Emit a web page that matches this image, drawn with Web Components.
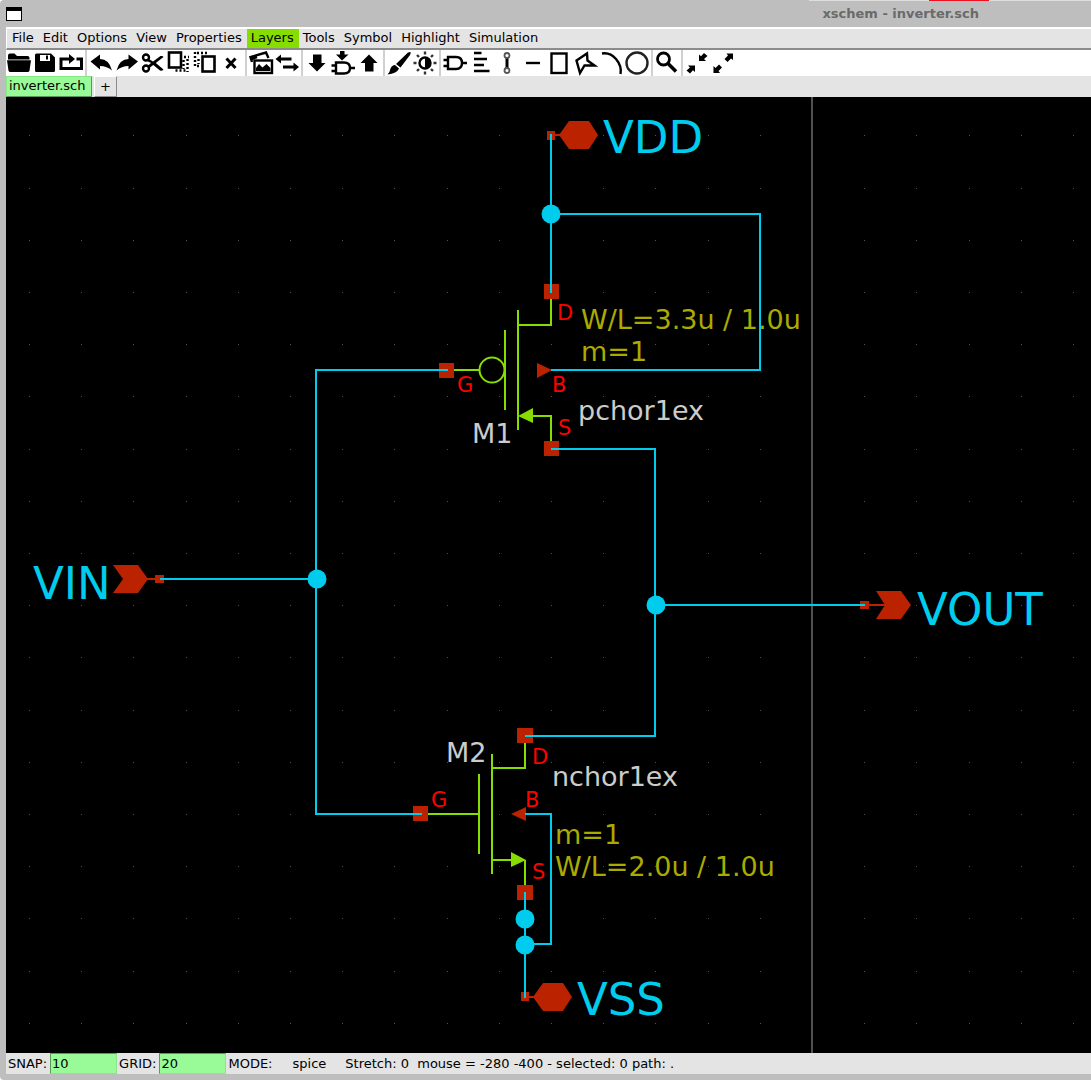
<!DOCTYPE html>
<html lang="en">
<head>
<meta charset="utf-8">
<title>xschem - inverter.sch</title>
<style>
  html, body { height: 100%; }
  body {
    margin: 0;
    background: #fff;
    color: #000;
    font: 13px/16px "DejaVu Sans", Verdana, sans-serif;
  }
</style>
</head>
<body>
<app-window>
  <title-bar slot="title">xschem - inverter.sch</title-bar>
  <menu-bar>
    <menu-item>File</menu-item>
    <menu-item>Edit</menu-item>
    <menu-item>Options</menu-item>
    <menu-item>View</menu-item>
    <menu-item>Properties</menu-item>
    <menu-item active>Layers</menu-item>
    <menu-item>Tools</menu-item>
    <menu-item>Symbol</menu-item>
    <menu-item>Highlight</menu-item>
    <menu-item>Simulation</menu-item>
  </menu-bar>
  <tool-bar></tool-bar>
  <tab-bar>
    <tab-button active>inverter.sch</tab-button>
    <tab-button>+</tab-button>
  </tab-bar>
  <schematic-view></schematic-view>
  <status-bar snap="10" grid="20" mode="spice">Stretch: 0  mouse = -280 -400 - selected: 0 path: .</status-bar>
</app-window>

<script>
const define = (name, html, setup) => customElements.define(name, class extends HTMLElement {
  constructor() {
    super();
    this.attachShadow({ mode: 'open' }).innerHTML = html;
  }
  connectedCallback() { if (setup) setup(this, this.shadowRoot); }
});

define('app-window', `
<style>
  :host {
    display: flex; flex-direction: column; box-sizing: border-box; min-height: 100vh;
    background: #bebebe; border-radius: 4px 0 0 4px; overflow: hidden;
  }
  main { flex: 1; display: flex; flex-direction: column; margin: 0 0 6px 6px; background: #e4e4e4; }
</style>
<slot name="title"></slot>
<main><slot></slot></main>`);

define('title-bar', `
<style>
  :host {
    display: flex; align-items: center; justify-content: space-between; position: relative;
    height: 27px; padding: 0 112px 0 6px; color: #6a6a6a; font-weight: bold;
  }
  .menu {
    width: 16px; height: 14px; padding: 0; box-sizing: border-box;
    background: #fff; border: 1px solid #000; border-top-width: 4px; border-radius: 0;
  }
  .behind { position: absolute; top: 0; right: 0; width: 282px; height: 1px; display: flex; background: #dedede; }
  .behind i { margin-left: 120px; width: 60px; background: #ee1122; }
</style>
<button class="menu" aria-label="Window menu"></button>
<slot></slot>
<div class="behind"><i></i></div>`);

define('menu-bar', `
<style>
  :host {
    display: flex; height: 19px; padding-left: 1px; background: #e4e4e4;
    border: solid #fff; border-width: 2px 0 0 1px;
    border-bottom: 2px solid #8b8b8b;
  }
</style>
<slot></slot>`);

define('menu-item', `
<style>
  :host { display: flex; }
  button {
    font: inherit; color: inherit; background: none; border: 0; border-radius: 0;
    padding: 0 5px 2px 4px;
  }
  :host([active]) button { background: #88dd00; }
</style>
<button><slot></slot></button>`);

const icons = {
  'Open': `<path d="M2 9.500V5.500Q2 3.500 4 3.500H8.500L11 6H21.500Q23.500 6 23.500 8V9.500Z"/><path d="M1 10.300H25L23.500 20.500Q23.200 22 21.500 22H4.500Q2.800 22 2.500 20.500Z"/>`,
  'Save': `<path fill-rule="evenodd" d="M4.500 3.500H19L23 7.500V20.500Q23 22 21.500 22H4.500Q3 22 3 20.500V5Q3 3.500 4.500 3.500ZM8 5V11H18V5ZM14 5.500H16V9.500H14Z"/>`,
  'Reload': `<path class="l" stroke-width="3" d="M12 9H3V18.500H23.500V9H18.500"/><path d="M11 4L17 9L11 14Z"/>`,
  '|1': '',
  'Undo': `<path d="M2.500 11.500L12 4.500V9Q21 9 24 20.500Q19 16 12 16V19.500Z"/>`,
  'Redo': `<path d="M24 11.500L14.500 4.500V9Q5.500 9 2.500 20.500Q7.500 16 14.500 16V19.500Z"/>`,
  'Cut': `<g class="l" stroke-width="2.400"><circle cx="6" cy="7.500" r="3"/><circle cx="6" cy="18.500" r="3"/></g><path d="M8 8.500L13 11.500L20.500 6Q23 5.500 23.500 7L10 17.500L8 15.500L11 13L7 11ZM13 14.800L15.500 12.800L23.500 19.500Q22 21.500 20 20.500Z"/>`,
  'Copy': `<rect class="l" x="3" y="2.500" width="12" height="15" stroke-width="2.600"/><path class="l" stroke-dasharray="2 2" d="M18 7H23M21.500 9V22M9.500 20.500H21M17.500 10V19"/>`,
  'Paste': `<rect class="l" x="10.500" y="6.500" width="12" height="15" stroke-width="2.600"/><path class="l" stroke-dasharray="2 2" d="M3 2V17M5 3H16M5 16H9M6.500 9V14"/>`,
  'Delete': `<path class="l" stroke-width="3" d="M8.500 8.500L17.500 18M17.500 8.500L8.500 18"/>`,
  '|2': '',
  'Merge file': `<rect class="l" x="6.500" y="10.500" width="17.500" height="12.500"/><path d="M8 21V18L11 14L14.500 17.500L18.500 14L22.500 18V21Z"/><path class="l" d="M4 12L2.500 7L18 2.500L20.500 8M3.500 9L9 7"/>`,
  'Swap': `<path class="l" stroke-width="3" d="M5 9H17.500M9 17H21"/><path d="M1.500 9L7 4.500V13.500ZM25 17L19.500 12.500V21.500Z"/>`,
  '|3': '',
  'Descend': `<path d="M9 4.500H17.500V13H21.500L13 21.500L4.500 13H9Z"/>`,
  'Descend symbol': `<path d="M10 1H14.500V4.500H18.500L12 10.500L6 4.500H10Z"/><path class="l" d="M6 12.500H14Q20 12.500 20 18T14 23.500H6ZM1.500 15.500H6M1.500 21H6M20 18H25"/>`,
  'Ascend': `<path d="M9 21.500H17.500V13H21.500L13 4.500L4.500 13H9Z"/>`,
  '|4': '',
  'Change colors': `<path d="M24.500 2Q25 3 24 5L14.500 17.500L10 14L22 2.500ZM9 15L13 18.500Q11 23.500 1.500 24.500Q4 22 4.500 18.500Q6 15 9 15Z"/>`,
  'Dim': `<circle class="l" cx="13" cy="13" r="5.500"/><path d="M13 7.500A5.500 5.500 0 0 1 13 18.500Z"/><path class="l" stroke="#333" d="M13 1.500V4.500M13 21.500V24.500M1.500 13H4.500M21.500 13H24.500M5 5L7 7M19 19L21 21M21 5L19 7M5 21L7 19"/>`,
  '|5': '',
  'Insert symbol': `<path class="l" d="M6 7H14Q20 7 20 13T14 19H6ZM1.500 10H6M1.500 16H6M20 13H25"/>`,
  'Insert text': `<path class="l" d="M6 3H13.500M6 9H19M6 15H16M6 21H21.500"/>`,
  'Insert wire': `<path class="l" d="M13 7V19" stroke-width="3"/><g class="l" stroke="#555" stroke-width="1.800"><circle cx="13" cy="5.500" r="2.500"/><circle cx="13" cy="20.500" r="2.500"/></g>`,
  'Insert line': `<path class="l" d="M6 13H20"/>`,
  'Insert rectangle': `<rect class="l" x="5.500" y="3.500" width="15" height="19.500"/>`,
  'Insert polygon': `<path class="l" d="M4.500 10.500L15 3.500L15.500 10.500L22.500 15.500L12.500 15.500L8 23Z"/>`,
  'Insert arc': `<path class="l" d="M4 3.500Q12 2 18 9T22.500 24"/>`,
  'Insert circle': `<circle class="l" cx="13" cy="13" r="10.500" stroke="#222"/>`,
  '|6': '',
  'Zoom': `<circle class="l" cx="9.500" cy="9" r="6" stroke-width="2.800"/><path class="l" stroke-width="3.500" d="M14 13.500L22 21.500"/>`,
  '|7': '',
  'Zoom out': `<path d="M4 15.500H11V22L9 20.200L6 23.500L2.500 20.500L6 17.500ZM22 11H15V4.500L17 6.200L20 3L23.500 6L20 9Z"/>`,
  'Zoom full': `<path d="M10 23H3.500V16L5.500 18L9 14.500L12 17.500L8.500 21ZM16.500 3.500H23V10L21 8.500L17.500 12L14.500 9L18 5.500Z"/>`
};

define('tool-bar', `
<style>
  :host { display: flex; height: 26px; background: #fff; }
  button { width: 26px; height: 26px; padding: 0; border: 0; background: none; display: block; }
  svg { display: block; width: 26px; height: 26px; }
  .l { fill: none; stroke-width: var(--w, 2.4); }
  i { width: 2px; margin: 0 1px; background: #d0d0d0; }
</style>`, (host, root) => {
  for (const [name, art] of Object.entries(icons)) {
    if (name[0] === '|') { root.append(document.createElement('i')); continue; }
    const b = document.createElement('button');
    b.setAttribute('aria-label', name);
    b.innerHTML = `<svg viewBox="0 0 26 26">${art}</svg>`;
    b.querySelectorAll('.l').forEach(e => {
      if (!e.hasAttribute('stroke')) e.setAttribute('stroke', '#000');
      if (e.hasAttribute('stroke-width')) e.style.setProperty('--w', e.getAttribute('stroke-width'));
    });
    root.append(b);
  }
});

define('tab-bar', `
<style>:host { display: flex; gap: 2px; height: 21px; background: #e4e4e4; }</style>
<slot></slot>`);

define('tab-button', `
<style>
  :host { display: flex; }
  button {
    font: inherit; color: inherit; background: #e4e4e4; padding: 0 5px; border-radius: 0;
    min-width: 22px; border: 1px solid #fff; border-right-color: #8b8b8b; border-bottom-color: #8b8b8b;
  }
  :host([active]) button {
    padding: 0 5px 2px 2px; min-width: 86px; text-align: left;
    background: #98fb98; border-color: #88e888 #5c975c #5c975c #88e888;
  }
</style>
<button><slot></slot></button>`);

define('schematic-view', `
<style>
  :host { flex: 1; display: flex; background: #000; min-height: 956px; overflow: hidden; }
  svg { flex: 1; width: 100%; min-width: 0; }
  text { font-family: "DejaVu Sans", sans-serif; }
  .dots { fill: #505050; shape-rendering: crispEdges; }
  .axis { stroke: #505050; stroke-width: 2; }
  .wire { fill: none; stroke: #00ccee; stroke-width: 2; }
  .node, .net { fill: #00ccee; }
  .net { font-size: 45px; }
  .dev { fill: none; stroke: #88dd00; stroke-width: 2; }
  .arrow { fill: #88dd00; }
  .pin { fill: #bb2200; }
  .lead { stroke: #bb2200; stroke-width: 2; }
  .term { fill: #ff0000; font-size: 21px; }
  .name { fill: #cccccc; font-size: 27px; }
  .prop { fill: #aaaa00; font-size: 27px; }
</style>
<svg role="img" aria-label="CMOS inverter schematic">
 <g transform="translate(-6 -97)">
  <path class="dots"/>
  <path class="axis" d="M812 97V4000"/>

  <g class="net">
    <text x="603" y="153">VDD</text>
    <text x="577" y="1015">VSS</text>
    <text x="33" y="599">VIN</text>
    <text x="917" y="625">VOUT</text>
  </g>
  <g class="pin">
    <path d="M559 135L569 121H589L598 135L589 149H569Z"/>
    <path d="M533 997L543 983H563L572 997L563 1011H543Z"/>
    <path d="M113 565H138L148 579L138 593H113L123 579Z"/>
    <path d="M876 591H901L911 605L901 619H876L885 605Z"/>
    <path d="M547 131h8v9h-8zM521 992h8v9h-8zM155 575h9v8h-9zM860 601h9v8h-9z"/>
    <path d="M544 284h15v15h-15zM439 363h15v15h-15zM544 441h15v15h-15z"/>
    <path d="M517 728h16v15h-16zM413 806h15v15h-15zM517 885h16v15h-16z"/>
    <path d="M537 363L552 370L537 378ZM526 807L511 814L526 821Z"/>
  </g>
  <path class="lead" d="M555 135H560M529 997H534M147 579H155M869 605H886"/>

  <g class="dev">
    <path d="M454 370H479M505 330V410M518 310V430M518 325H551V299M530 416H551V441"/>
    <circle cx="492" cy="370" r="12.500"/>
    <path d="M428 814H479M479 774V854M492 754V874M492 768H525V743M492 860H514M525 860V885"/>
  </g>
  <path class="arrow" d="M518 416L533 408V423ZM526 860L511 852V867Z"/>

  <g class="term">
    <text x="557" y="320">D</text><text x="457" y="392">G</text>
    <text x="552" y="392">B</text><text x="558" y="435">S</text>
    <text x="532" y="764">D</text><text x="431" y="807">G</text>
    <text x="525" y="807">B</text><text x="532" y="879">S</text>
  </g>
  <g class="name">
    <text x="472" y="443">M1</text><text x="578" y="420">pchor1ex</text>
    <text x="446" y="762">M2</text><text x="552" y="786">nchor1ex</text>
  </g>
  <g class="prop">
    <text x="581" y="329">W/L=3.3u / 1.0u</text><text x="581" y="361">m=1</text>
    <text x="555" y="844">m=1</text><text x="555" y="876">W/L=2.0u / 1.0u</text>
  </g>

  <path class="wire" d="M551 134V293M551 214H760V370H551M448 370H316V814H422M160 579H316M551 449H655V736H525M655 605H865M525 892V998M525 814H551V944H525"/>
  <g class="node">
    <circle cx="551" cy="214" r="9.500"/><circle cx="317" cy="579" r="9.500"/>
    <circle cx="656" cy="605" r="9.500"/><circle cx="525" cy="919" r="9.500"/>
    <circle cx="525" cy="945" r="9.500"/>
  </g>
 </g>
</svg>`, (host, root) => {
  const pitch = 52.2;
  let d = '';
  for (let r = 0; r < 50; r++)
    for (let c = 0; c < 60; c++)
      d += `M${Math.round(29 + c * pitch)} ${Math.round(135.4 + r * pitch)}h1v1h-1z`;
  root.querySelector('.dots').setAttribute('d', d);
});

define('status-bar', `
<style>
  :host { display: flex; align-items: stretch; height: 21px; line-height: 21px; background: #e4e4e4; }
  label { display: flex; }
  span { padding: 0 3px 0 2px; white-space: nowrap; }
  input {
    width: 67px; box-sizing: border-box; margin: 0; padding: 0 1px; border-radius: 0;
    font: inherit; color: inherit; background: #98fb98;
    border: 1px solid #88e888; border-top-color: #5c975c; border-left-color: #5c975c;
  }
  .mode { padding: 0 17px; }
  .info { white-space: pre; }
</style>
<label><span>SNAP:</span><input id="snap"></label>
<label><span>GRID:</span><input id="grid"></label>
<span>MODE:</span>
<span class="mode"></span>
<span class="info"><slot></slot></span>`, (host, root) => {
  root.getElementById('snap').value = host.getAttribute('snap');
  root.getElementById('grid').value = host.getAttribute('grid');
  root.querySelector('.mode').textContent = host.getAttribute('mode');
});
</script>
</body>
</html>
